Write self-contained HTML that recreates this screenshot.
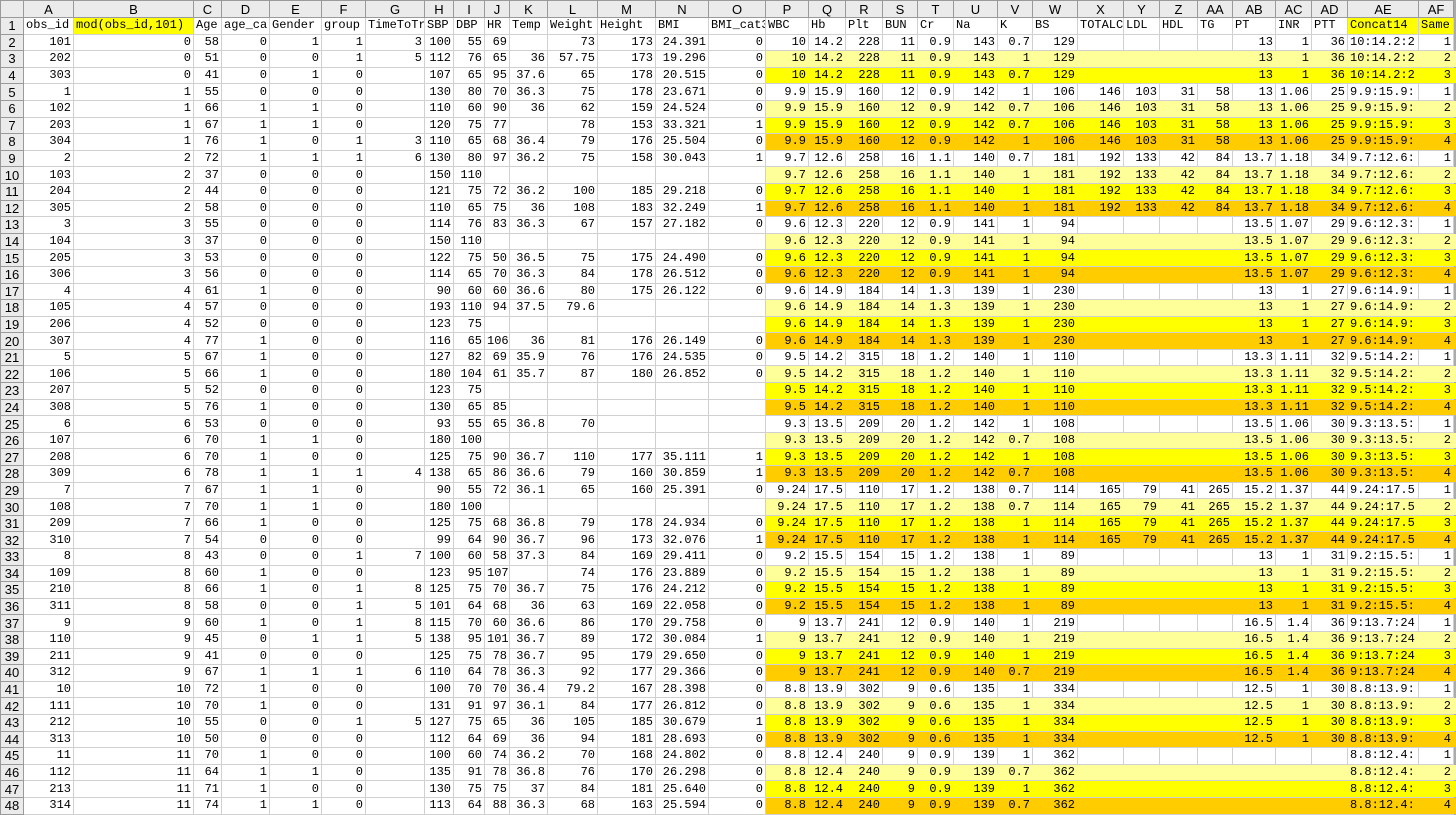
<!DOCTYPE html>
<html><head><meta charset="utf-8"><style>
body{margin:0;background:#fff;width:1456px;height:814px;overflow:hidden}
table{border-collapse:collapse;table-layout:fixed;width:1456px;font-family:"Liberation Mono",monospace;font-size:12px;color:#000}
td,th{height:15.6px;padding:0 2px;overflow:hidden;white-space:nowrap;border:1px solid #d0d0d0;text-align:right;line-height:15px}
th{background:#ebebeb;border-color:#9a9a9a;font-family:"Liberation Sans",sans-serif;font-weight:normal;font-size:13px;text-align:center;padding:0}
tr.h th{height:16px}
tr.f td{text-align:left}
td.y{background:#ffff00}
tr.c2 td:nth-child(n+17){background:#ffff99;border-left-color:#ffff99;border-right-color:#ffff99}
tr.c3 td:nth-child(n+17){background:#ffff00;border-left-color:#ffff00;border-right-color:#ffff00}
tr.c4 td:nth-child(n+17){background:#ffcc00;border-left-color:#ffcc00;border-right-color:#ffcc00}
td:nth-child(32){text-align:left}
td.e,th.e{background:#ababab;border-color:#ababab}
</style></head><body>
<table>
<colgroup><col style="width:23px"><col style="width:50px"><col style="width:120px"><col style="width:28px"><col style="width:48px"><col style="width:52px"><col style="width:44px"><col style="width:59px"><col style="width:29px"><col style="width:31px"><col style="width:25px"><col style="width:38px"><col style="width:50px"><col style="width:58px"><col style="width:53px"><col style="width:57px"><col style="width:43px"><col style="width:37px"><col style="width:37px"><col style="width:35px"><col style="width:36px"><col style="width:44px"><col style="width:35px"><col style="width:45px"><col style="width:46px"><col style="width:36px"><col style="width:38px"><col style="width:35px"><col style="width:43px"><col style="width:36px"><col style="width:36px"><col style="width:71px"><col style="width:35px"><col style="width:3px"></colgroup>
<tr class="h"><th></th><th>A</th><th>B</th><th>C</th><th>D</th><th>E</th><th>F</th><th>G</th><th>H</th><th>I</th><th>J</th><th>K</th><th>L</th><th>M</th><th>N</th><th>O</th><th>P</th><th>Q</th><th>R</th><th>S</th><th>T</th><th>U</th><th>V</th><th>W</th><th>X</th><th>Y</th><th>Z</th><th>AA</th><th>AB</th><th>AC</th><th>AD</th><th>AE</th><th>AF</th><th class="e"></th></tr>
<tr class="f"><th>1</th><td>obs_id</td><td class="y">mod(obs_id,101)</td><td>Age</td><td>age_ca</td><td>Gender</td><td>group</td><td>TimeToTr</td><td>SBP</td><td>DBP</td><td>HR</td><td>Temp</td><td>Weight</td><td>Height</td><td>BMI</td><td>BMI_cat3</td><td>WBC</td><td>Hb</td><td>Plt</td><td>BUN</td><td>Cr</td><td>Na</td><td>K</td><td>BS</td><td>TOTALC</td><td>LDL</td><td>HDL</td><td>TG</td><td>PT</td><td>INR</td><td>PTT</td><td class="y">Concat14</td><td class="y">Same</td><td class="e"></td></tr>
<tr><th>2</th><td>101</td><td>0</td><td>58</td><td>0</td><td>1</td><td>1</td><td>3</td><td>100</td><td>55</td><td>69</td><td></td><td>73</td><td>173</td><td>24.391</td><td>0</td><td>10</td><td>14.2</td><td>228</td><td>11</td><td>0.9</td><td>143</td><td>0.7</td><td>129</td><td></td><td></td><td></td><td></td><td>13</td><td>1</td><td>36</td><td>10:14.2:2</td><td>1</td><td class="e"></td></tr>
<tr class="c2"><th>3</th><td>202</td><td>0</td><td>51</td><td>0</td><td>0</td><td>1</td><td>5</td><td>112</td><td>76</td><td>65</td><td>36</td><td>57.75</td><td>173</td><td>19.296</td><td>0</td><td>10</td><td>14.2</td><td>228</td><td>11</td><td>0.9</td><td>143</td><td>1</td><td>129</td><td></td><td></td><td></td><td></td><td>13</td><td>1</td><td>36</td><td>10:14.2:2</td><td>2</td><td class="e"></td></tr>
<tr class="c3"><th>4</th><td>303</td><td>0</td><td>41</td><td>0</td><td>1</td><td>0</td><td></td><td>107</td><td>65</td><td>95</td><td>37.6</td><td>65</td><td>178</td><td>20.515</td><td>0</td><td>10</td><td>14.2</td><td>228</td><td>11</td><td>0.9</td><td>143</td><td>0.7</td><td>129</td><td></td><td></td><td></td><td></td><td>13</td><td>1</td><td>36</td><td>10:14.2:2</td><td>3</td><td class="e"></td></tr>
<tr><th>5</th><td>1</td><td>1</td><td>55</td><td>0</td><td>0</td><td>0</td><td></td><td>130</td><td>80</td><td>70</td><td>36.3</td><td>75</td><td>178</td><td>23.671</td><td>0</td><td>9.9</td><td>15.9</td><td>160</td><td>12</td><td>0.9</td><td>142</td><td>1</td><td>106</td><td>146</td><td>103</td><td>31</td><td>58</td><td>13</td><td>1.06</td><td>25</td><td>9.9:15.9:</td><td>1</td><td class="e"></td></tr>
<tr class="c2"><th>6</th><td>102</td><td>1</td><td>66</td><td>1</td><td>1</td><td>0</td><td></td><td>110</td><td>60</td><td>90</td><td>36</td><td>62</td><td>159</td><td>24.524</td><td>0</td><td>9.9</td><td>15.9</td><td>160</td><td>12</td><td>0.9</td><td>142</td><td>0.7</td><td>106</td><td>146</td><td>103</td><td>31</td><td>58</td><td>13</td><td>1.06</td><td>25</td><td>9.9:15.9:</td><td>2</td><td class="e"></td></tr>
<tr class="c3"><th>7</th><td>203</td><td>1</td><td>67</td><td>1</td><td>1</td><td>0</td><td></td><td>120</td><td>75</td><td>77</td><td></td><td>78</td><td>153</td><td>33.321</td><td>1</td><td>9.9</td><td>15.9</td><td>160</td><td>12</td><td>0.9</td><td>142</td><td>0.7</td><td>106</td><td>146</td><td>103</td><td>31</td><td>58</td><td>13</td><td>1.06</td><td>25</td><td>9.9:15.9:</td><td>3</td><td class="e"></td></tr>
<tr class="c4"><th>8</th><td>304</td><td>1</td><td>76</td><td>1</td><td>0</td><td>1</td><td>3</td><td>110</td><td>65</td><td>68</td><td>36.4</td><td>79</td><td>176</td><td>25.504</td><td>0</td><td>9.9</td><td>15.9</td><td>160</td><td>12</td><td>0.9</td><td>142</td><td>1</td><td>106</td><td>146</td><td>103</td><td>31</td><td>58</td><td>13</td><td>1.06</td><td>25</td><td>9.9:15.9:</td><td>4</td><td class="e"></td></tr>
<tr><th>9</th><td>2</td><td>2</td><td>72</td><td>1</td><td>1</td><td>1</td><td>6</td><td>130</td><td>80</td><td>97</td><td>36.2</td><td>75</td><td>158</td><td>30.043</td><td>1</td><td>9.7</td><td>12.6</td><td>258</td><td>16</td><td>1.1</td><td>140</td><td>0.7</td><td>181</td><td>192</td><td>133</td><td>42</td><td>84</td><td>13.7</td><td>1.18</td><td>34</td><td>9.7:12.6:</td><td>1</td><td class="e"></td></tr>
<tr class="c2"><th>10</th><td>103</td><td>2</td><td>37</td><td>0</td><td>0</td><td>0</td><td></td><td>150</td><td>110</td><td></td><td></td><td></td><td></td><td></td><td></td><td>9.7</td><td>12.6</td><td>258</td><td>16</td><td>1.1</td><td>140</td><td>1</td><td>181</td><td>192</td><td>133</td><td>42</td><td>84</td><td>13.7</td><td>1.18</td><td>34</td><td>9.7:12.6:</td><td>2</td><td class="e"></td></tr>
<tr class="c3"><th>11</th><td>204</td><td>2</td><td>44</td><td>0</td><td>0</td><td>0</td><td></td><td>121</td><td>75</td><td>72</td><td>36.2</td><td>100</td><td>185</td><td>29.218</td><td>0</td><td>9.7</td><td>12.6</td><td>258</td><td>16</td><td>1.1</td><td>140</td><td>1</td><td>181</td><td>192</td><td>133</td><td>42</td><td>84</td><td>13.7</td><td>1.18</td><td>34</td><td>9.7:12.6:</td><td>3</td><td class="e"></td></tr>
<tr class="c4"><th>12</th><td>305</td><td>2</td><td>58</td><td>0</td><td>0</td><td>0</td><td></td><td>110</td><td>65</td><td>75</td><td>36</td><td>108</td><td>183</td><td>32.249</td><td>1</td><td>9.7</td><td>12.6</td><td>258</td><td>16</td><td>1.1</td><td>140</td><td>1</td><td>181</td><td>192</td><td>133</td><td>42</td><td>84</td><td>13.7</td><td>1.18</td><td>34</td><td>9.7:12.6:</td><td>4</td><td class="e"></td></tr>
<tr><th>13</th><td>3</td><td>3</td><td>55</td><td>0</td><td>0</td><td>0</td><td></td><td>114</td><td>76</td><td>83</td><td>36.3</td><td>67</td><td>157</td><td>27.182</td><td>0</td><td>9.6</td><td>12.3</td><td>220</td><td>12</td><td>0.9</td><td>141</td><td>1</td><td>94</td><td></td><td></td><td></td><td></td><td>13.5</td><td>1.07</td><td>29</td><td>9.6:12.3:</td><td>1</td><td class="e"></td></tr>
<tr class="c2"><th>14</th><td>104</td><td>3</td><td>37</td><td>0</td><td>0</td><td>0</td><td></td><td>150</td><td>110</td><td></td><td></td><td></td><td></td><td></td><td></td><td>9.6</td><td>12.3</td><td>220</td><td>12</td><td>0.9</td><td>141</td><td>1</td><td>94</td><td></td><td></td><td></td><td></td><td>13.5</td><td>1.07</td><td>29</td><td>9.6:12.3:</td><td>2</td><td class="e"></td></tr>
<tr class="c3"><th>15</th><td>205</td><td>3</td><td>53</td><td>0</td><td>0</td><td>0</td><td></td><td>122</td><td>75</td><td>50</td><td>36.5</td><td>75</td><td>175</td><td>24.490</td><td>0</td><td>9.6</td><td>12.3</td><td>220</td><td>12</td><td>0.9</td><td>141</td><td>1</td><td>94</td><td></td><td></td><td></td><td></td><td>13.5</td><td>1.07</td><td>29</td><td>9.6:12.3:</td><td>3</td><td class="e"></td></tr>
<tr class="c4"><th>16</th><td>306</td><td>3</td><td>56</td><td>0</td><td>0</td><td>0</td><td></td><td>114</td><td>65</td><td>70</td><td>36.3</td><td>84</td><td>178</td><td>26.512</td><td>0</td><td>9.6</td><td>12.3</td><td>220</td><td>12</td><td>0.9</td><td>141</td><td>1</td><td>94</td><td></td><td></td><td></td><td></td><td>13.5</td><td>1.07</td><td>29</td><td>9.6:12.3:</td><td>4</td><td class="e"></td></tr>
<tr><th>17</th><td>4</td><td>4</td><td>61</td><td>1</td><td>0</td><td>0</td><td></td><td>90</td><td>60</td><td>60</td><td>36.6</td><td>80</td><td>175</td><td>26.122</td><td>0</td><td>9.6</td><td>14.9</td><td>184</td><td>14</td><td>1.3</td><td>139</td><td>1</td><td>230</td><td></td><td></td><td></td><td></td><td>13</td><td>1</td><td>27</td><td>9.6:14.9:</td><td>1</td><td class="e"></td></tr>
<tr class="c2"><th>18</th><td>105</td><td>4</td><td>57</td><td>0</td><td>0</td><td>0</td><td></td><td>193</td><td>110</td><td>94</td><td>37.5</td><td>79.6</td><td></td><td></td><td></td><td>9.6</td><td>14.9</td><td>184</td><td>14</td><td>1.3</td><td>139</td><td>1</td><td>230</td><td></td><td></td><td></td><td></td><td>13</td><td>1</td><td>27</td><td>9.6:14.9:</td><td>2</td><td class="e"></td></tr>
<tr class="c3"><th>19</th><td>206</td><td>4</td><td>52</td><td>0</td><td>0</td><td>0</td><td></td><td>123</td><td>75</td><td></td><td></td><td></td><td></td><td></td><td></td><td>9.6</td><td>14.9</td><td>184</td><td>14</td><td>1.3</td><td>139</td><td>1</td><td>230</td><td></td><td></td><td></td><td></td><td>13</td><td>1</td><td>27</td><td>9.6:14.9:</td><td>3</td><td class="e"></td></tr>
<tr class="c4"><th>20</th><td>307</td><td>4</td><td>77</td><td>1</td><td>0</td><td>0</td><td></td><td>116</td><td>65</td><td>106</td><td>36</td><td>81</td><td>176</td><td>26.149</td><td>0</td><td>9.6</td><td>14.9</td><td>184</td><td>14</td><td>1.3</td><td>139</td><td>1</td><td>230</td><td></td><td></td><td></td><td></td><td>13</td><td>1</td><td>27</td><td>9.6:14.9:</td><td>4</td><td class="e"></td></tr>
<tr><th>21</th><td>5</td><td>5</td><td>67</td><td>1</td><td>0</td><td>0</td><td></td><td>127</td><td>82</td><td>69</td><td>35.9</td><td>76</td><td>176</td><td>24.535</td><td>0</td><td>9.5</td><td>14.2</td><td>315</td><td>18</td><td>1.2</td><td>140</td><td>1</td><td>110</td><td></td><td></td><td></td><td></td><td>13.3</td><td>1.11</td><td>32</td><td>9.5:14.2:</td><td>1</td><td class="e"></td></tr>
<tr class="c2"><th>22</th><td>106</td><td>5</td><td>66</td><td>1</td><td>0</td><td>0</td><td></td><td>180</td><td>104</td><td>61</td><td>35.7</td><td>87</td><td>180</td><td>26.852</td><td>0</td><td>9.5</td><td>14.2</td><td>315</td><td>18</td><td>1.2</td><td>140</td><td>1</td><td>110</td><td></td><td></td><td></td><td></td><td>13.3</td><td>1.11</td><td>32</td><td>9.5:14.2:</td><td>2</td><td class="e"></td></tr>
<tr class="c3"><th>23</th><td>207</td><td>5</td><td>52</td><td>0</td><td>0</td><td>0</td><td></td><td>123</td><td>75</td><td></td><td></td><td></td><td></td><td></td><td></td><td>9.5</td><td>14.2</td><td>315</td><td>18</td><td>1.2</td><td>140</td><td>1</td><td>110</td><td></td><td></td><td></td><td></td><td>13.3</td><td>1.11</td><td>32</td><td>9.5:14.2:</td><td>3</td><td class="e"></td></tr>
<tr class="c4"><th>24</th><td>308</td><td>5</td><td>76</td><td>1</td><td>0</td><td>0</td><td></td><td>130</td><td>65</td><td>85</td><td></td><td></td><td></td><td></td><td></td><td>9.5</td><td>14.2</td><td>315</td><td>18</td><td>1.2</td><td>140</td><td>1</td><td>110</td><td></td><td></td><td></td><td></td><td>13.3</td><td>1.11</td><td>32</td><td>9.5:14.2:</td><td>4</td><td class="e"></td></tr>
<tr><th>25</th><td>6</td><td>6</td><td>53</td><td>0</td><td>0</td><td>0</td><td></td><td>93</td><td>55</td><td>65</td><td>36.8</td><td>70</td><td></td><td></td><td></td><td>9.3</td><td>13.5</td><td>209</td><td>20</td><td>1.2</td><td>142</td><td>1</td><td>108</td><td></td><td></td><td></td><td></td><td>13.5</td><td>1.06</td><td>30</td><td>9.3:13.5:</td><td>1</td><td class="e"></td></tr>
<tr class="c2"><th>26</th><td>107</td><td>6</td><td>70</td><td>1</td><td>1</td><td>0</td><td></td><td>180</td><td>100</td><td></td><td></td><td></td><td></td><td></td><td></td><td>9.3</td><td>13.5</td><td>209</td><td>20</td><td>1.2</td><td>142</td><td>0.7</td><td>108</td><td></td><td></td><td></td><td></td><td>13.5</td><td>1.06</td><td>30</td><td>9.3:13.5:</td><td>2</td><td class="e"></td></tr>
<tr class="c3"><th>27</th><td>208</td><td>6</td><td>70</td><td>1</td><td>0</td><td>0</td><td></td><td>125</td><td>75</td><td>90</td><td>36.7</td><td>110</td><td>177</td><td>35.111</td><td>1</td><td>9.3</td><td>13.5</td><td>209</td><td>20</td><td>1.2</td><td>142</td><td>1</td><td>108</td><td></td><td></td><td></td><td></td><td>13.5</td><td>1.06</td><td>30</td><td>9.3:13.5:</td><td>3</td><td class="e"></td></tr>
<tr class="c4"><th>28</th><td>309</td><td>6</td><td>78</td><td>1</td><td>1</td><td>1</td><td>4</td><td>138</td><td>65</td><td>86</td><td>36.6</td><td>79</td><td>160</td><td>30.859</td><td>1</td><td>9.3</td><td>13.5</td><td>209</td><td>20</td><td>1.2</td><td>142</td><td>0.7</td><td>108</td><td></td><td></td><td></td><td></td><td>13.5</td><td>1.06</td><td>30</td><td>9.3:13.5:</td><td>4</td><td class="e"></td></tr>
<tr><th>29</th><td>7</td><td>7</td><td>67</td><td>1</td><td>1</td><td>0</td><td></td><td>90</td><td>55</td><td>72</td><td>36.1</td><td>65</td><td>160</td><td>25.391</td><td>0</td><td>9.24</td><td>17.5</td><td>110</td><td>17</td><td>1.2</td><td>138</td><td>0.7</td><td>114</td><td>165</td><td>79</td><td>41</td><td>265</td><td>15.2</td><td>1.37</td><td>44</td><td>9.24:17.5</td><td>1</td><td class="e"></td></tr>
<tr class="c2"><th>30</th><td>108</td><td>7</td><td>70</td><td>1</td><td>1</td><td>0</td><td></td><td>180</td><td>100</td><td></td><td></td><td></td><td></td><td></td><td></td><td>9.24</td><td>17.5</td><td>110</td><td>17</td><td>1.2</td><td>138</td><td>0.7</td><td>114</td><td>165</td><td>79</td><td>41</td><td>265</td><td>15.2</td><td>1.37</td><td>44</td><td>9.24:17.5</td><td>2</td><td class="e"></td></tr>
<tr class="c3"><th>31</th><td>209</td><td>7</td><td>66</td><td>1</td><td>0</td><td>0</td><td></td><td>125</td><td>75</td><td>68</td><td>36.8</td><td>79</td><td>178</td><td>24.934</td><td>0</td><td>9.24</td><td>17.5</td><td>110</td><td>17</td><td>1.2</td><td>138</td><td>1</td><td>114</td><td>165</td><td>79</td><td>41</td><td>265</td><td>15.2</td><td>1.37</td><td>44</td><td>9.24:17.5</td><td>3</td><td class="e"></td></tr>
<tr class="c4"><th>32</th><td>310</td><td>7</td><td>54</td><td>0</td><td>0</td><td>0</td><td></td><td>99</td><td>64</td><td>90</td><td>36.7</td><td>96</td><td>173</td><td>32.076</td><td>1</td><td>9.24</td><td>17.5</td><td>110</td><td>17</td><td>1.2</td><td>138</td><td>1</td><td>114</td><td>165</td><td>79</td><td>41</td><td>265</td><td>15.2</td><td>1.37</td><td>44</td><td>9.24:17.5</td><td>4</td><td class="e"></td></tr>
<tr><th>33</th><td>8</td><td>8</td><td>43</td><td>0</td><td>0</td><td>1</td><td>7</td><td>100</td><td>60</td><td>58</td><td>37.3</td><td>84</td><td>169</td><td>29.411</td><td>0</td><td>9.2</td><td>15.5</td><td>154</td><td>15</td><td>1.2</td><td>138</td><td>1</td><td>89</td><td></td><td></td><td></td><td></td><td>13</td><td>1</td><td>31</td><td>9.2:15.5:</td><td>1</td><td class="e"></td></tr>
<tr class="c2"><th>34</th><td>109</td><td>8</td><td>60</td><td>1</td><td>0</td><td>0</td><td></td><td>123</td><td>95</td><td>107</td><td></td><td>74</td><td>176</td><td>23.889</td><td>0</td><td>9.2</td><td>15.5</td><td>154</td><td>15</td><td>1.2</td><td>138</td><td>1</td><td>89</td><td></td><td></td><td></td><td></td><td>13</td><td>1</td><td>31</td><td>9.2:15.5:</td><td>2</td><td class="e"></td></tr>
<tr class="c3"><th>35</th><td>210</td><td>8</td><td>66</td><td>1</td><td>0</td><td>1</td><td>8</td><td>125</td><td>75</td><td>70</td><td>36.7</td><td>75</td><td>176</td><td>24.212</td><td>0</td><td>9.2</td><td>15.5</td><td>154</td><td>15</td><td>1.2</td><td>138</td><td>1</td><td>89</td><td></td><td></td><td></td><td></td><td>13</td><td>1</td><td>31</td><td>9.2:15.5:</td><td>3</td><td class="e"></td></tr>
<tr class="c4"><th>36</th><td>311</td><td>8</td><td>58</td><td>0</td><td>0</td><td>1</td><td>5</td><td>101</td><td>64</td><td>68</td><td>36</td><td>63</td><td>169</td><td>22.058</td><td>0</td><td>9.2</td><td>15.5</td><td>154</td><td>15</td><td>1.2</td><td>138</td><td>1</td><td>89</td><td></td><td></td><td></td><td></td><td>13</td><td>1</td><td>31</td><td>9.2:15.5:</td><td>4</td><td class="e"></td></tr>
<tr><th>37</th><td>9</td><td>9</td><td>60</td><td>1</td><td>0</td><td>1</td><td>8</td><td>115</td><td>70</td><td>60</td><td>36.6</td><td>86</td><td>170</td><td>29.758</td><td>0</td><td>9</td><td>13.7</td><td>241</td><td>12</td><td>0.9</td><td>140</td><td>1</td><td>219</td><td></td><td></td><td></td><td></td><td>16.5</td><td>1.4</td><td>36</td><td>9:13.7:24</td><td>1</td><td class="e"></td></tr>
<tr class="c2"><th>38</th><td>110</td><td>9</td><td>45</td><td>0</td><td>1</td><td>1</td><td>5</td><td>138</td><td>95</td><td>101</td><td>36.7</td><td>89</td><td>172</td><td>30.084</td><td>1</td><td>9</td><td>13.7</td><td>241</td><td>12</td><td>0.9</td><td>140</td><td>1</td><td>219</td><td></td><td></td><td></td><td></td><td>16.5</td><td>1.4</td><td>36</td><td>9:13.7:24</td><td>2</td><td class="e"></td></tr>
<tr class="c3"><th>39</th><td>211</td><td>9</td><td>41</td><td>0</td><td>0</td><td>0</td><td></td><td>125</td><td>75</td><td>78</td><td>36.7</td><td>95</td><td>179</td><td>29.650</td><td>0</td><td>9</td><td>13.7</td><td>241</td><td>12</td><td>0.9</td><td>140</td><td>1</td><td>219</td><td></td><td></td><td></td><td></td><td>16.5</td><td>1.4</td><td>36</td><td>9:13.7:24</td><td>3</td><td class="e"></td></tr>
<tr class="c4"><th>40</th><td>312</td><td>9</td><td>67</td><td>1</td><td>1</td><td>1</td><td>6</td><td>110</td><td>64</td><td>78</td><td>36.3</td><td>92</td><td>177</td><td>29.366</td><td>0</td><td>9</td><td>13.7</td><td>241</td><td>12</td><td>0.9</td><td>140</td><td>0.7</td><td>219</td><td></td><td></td><td></td><td></td><td>16.5</td><td>1.4</td><td>36</td><td>9:13.7:24</td><td>4</td><td class="e"></td></tr>
<tr><th>41</th><td>10</td><td>10</td><td>72</td><td>1</td><td>0</td><td>0</td><td></td><td>100</td><td>70</td><td>70</td><td>36.4</td><td>79.2</td><td>167</td><td>28.398</td><td>0</td><td>8.8</td><td>13.9</td><td>302</td><td>9</td><td>0.6</td><td>135</td><td>1</td><td>334</td><td></td><td></td><td></td><td></td><td>12.5</td><td>1</td><td>30</td><td>8.8:13.9:</td><td>1</td><td class="e"></td></tr>
<tr class="c2"><th>42</th><td>111</td><td>10</td><td>70</td><td>1</td><td>0</td><td>0</td><td></td><td>131</td><td>91</td><td>97</td><td>36.1</td><td>84</td><td>177</td><td>26.812</td><td>0</td><td>8.8</td><td>13.9</td><td>302</td><td>9</td><td>0.6</td><td>135</td><td>1</td><td>334</td><td></td><td></td><td></td><td></td><td>12.5</td><td>1</td><td>30</td><td>8.8:13.9:</td><td>2</td><td class="e"></td></tr>
<tr class="c3"><th>43</th><td>212</td><td>10</td><td>55</td><td>0</td><td>0</td><td>1</td><td>5</td><td>127</td><td>75</td><td>65</td><td>36</td><td>105</td><td>185</td><td>30.679</td><td>1</td><td>8.8</td><td>13.9</td><td>302</td><td>9</td><td>0.6</td><td>135</td><td>1</td><td>334</td><td></td><td></td><td></td><td></td><td>12.5</td><td>1</td><td>30</td><td>8.8:13.9:</td><td>3</td><td class="e"></td></tr>
<tr class="c4"><th>44</th><td>313</td><td>10</td><td>50</td><td>0</td><td>0</td><td>0</td><td></td><td>112</td><td>64</td><td>69</td><td>36</td><td>94</td><td>181</td><td>28.693</td><td>0</td><td>8.8</td><td>13.9</td><td>302</td><td>9</td><td>0.6</td><td>135</td><td>1</td><td>334</td><td></td><td></td><td></td><td></td><td>12.5</td><td>1</td><td>30</td><td>8.8:13.9:</td><td>4</td><td class="e"></td></tr>
<tr><th>45</th><td>11</td><td>11</td><td>70</td><td>1</td><td>0</td><td>0</td><td></td><td>100</td><td>60</td><td>74</td><td>36.2</td><td>70</td><td>168</td><td>24.802</td><td>0</td><td>8.8</td><td>12.4</td><td>240</td><td>9</td><td>0.9</td><td>139</td><td>1</td><td>362</td><td></td><td></td><td></td><td></td><td></td><td></td><td></td><td>8.8:12.4:</td><td>1</td><td class="e"></td></tr>
<tr class="c2"><th>46</th><td>112</td><td>11</td><td>64</td><td>1</td><td>1</td><td>0</td><td></td><td>135</td><td>91</td><td>78</td><td>36.8</td><td>76</td><td>170</td><td>26.298</td><td>0</td><td>8.8</td><td>12.4</td><td>240</td><td>9</td><td>0.9</td><td>139</td><td>0.7</td><td>362</td><td></td><td></td><td></td><td></td><td></td><td></td><td></td><td>8.8:12.4:</td><td>2</td><td class="e"></td></tr>
<tr class="c3"><th>47</th><td>213</td><td>11</td><td>71</td><td>1</td><td>0</td><td>0</td><td></td><td>130</td><td>75</td><td>75</td><td>37</td><td>84</td><td>181</td><td>25.640</td><td>0</td><td>8.8</td><td>12.4</td><td>240</td><td>9</td><td>0.9</td><td>139</td><td>1</td><td>362</td><td></td><td></td><td></td><td></td><td></td><td></td><td></td><td>8.8:12.4:</td><td>3</td><td class="e"></td></tr>
<tr class="c4"><th>48</th><td>314</td><td>11</td><td>74</td><td>1</td><td>1</td><td>0</td><td></td><td>113</td><td>64</td><td>88</td><td>36.3</td><td>68</td><td>163</td><td>25.594</td><td>0</td><td>8.8</td><td>12.4</td><td>240</td><td>9</td><td>0.9</td><td>139</td><td>0.7</td><td>362</td><td></td><td></td><td></td><td></td><td></td><td></td><td></td><td>8.8:12.4:</td><td>4</td><td class="e"></td></tr>
</table>
</body></html>
